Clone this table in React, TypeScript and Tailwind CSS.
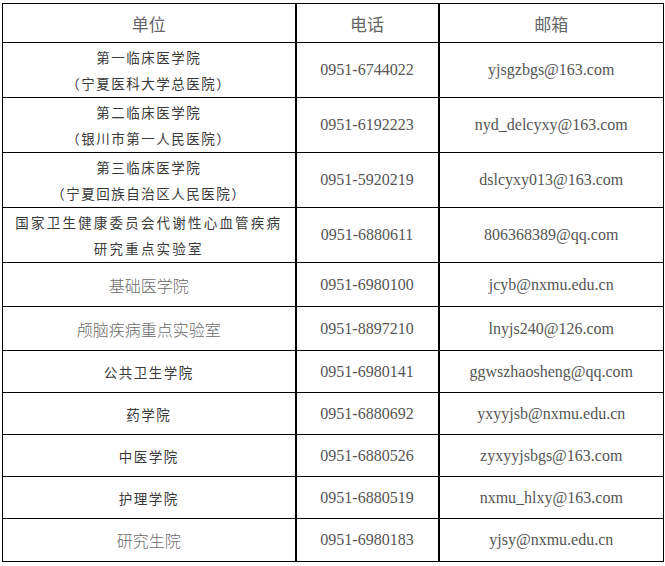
import React from 'react'

type Row = {
  unit: string[]
  kind: 'song' | 'hei'
  phone: string
  email: string
  h: string
  wide?: boolean
}

const rows: Row[] = [
  { unit: ['第一临床医学院', '（宁夏医科大学总医院）'], kind: 'song', phone: '0951-6744022', email: 'yjsgzbgs@163.com', h: 'h-[55px]' },
  { unit: ['第二临床医学院', '（银川市第一人民医院）'], kind: 'song', phone: '0951-6192223', email: 'nyd_delcyxy@163.com', h: 'h-[55px]' },
  { unit: ['第三临床医学院', '（宁夏回族自治区人民医院）'], kind: 'song', phone: '0951-5920219', email: 'dslcyxy013@163.com', h: 'h-[55px]' },
  { unit: ['国家卫生健康委员会代谢性心血管疾病', '研究重点实验室'], kind: 'song', phone: '0951-6880611', email: '806368389@qq.com', h: 'h-[55px]', wide: true },
  { unit: ['基础医学院'], kind: 'hei', phone: '0951-6980100', email: 'jcyb@nxmu.edu.cn', h: 'h-[44px]' },
  { unit: ['颅脑疾病重点实验室'], kind: 'hei', phone: '0951-8897210', email: 'lnyjs240@126.com', h: 'h-[44px]' },
  { unit: ['公共卫生学院'], kind: 'song', phone: '0951-6980141', email: 'ggwszhaosheng@qq.com', h: 'h-[42px]' },
  { unit: ['药学院'], kind: 'song', phone: '0951-6880692', email: 'yxyyjsb@nxmu.edu.cn', h: 'h-[42px]' },
  { unit: ['中医学院'], kind: 'song', phone: '0951-6880526', email: 'zyxyyjsbgs@163.com', h: 'h-[42px]' },
  { unit: ['护理学院'], kind: 'song', phone: '0951-6880519', email: 'nxmu_hlxy@163.com', h: 'h-[42px]' },
  { unit: ['研究生院'], kind: 'hei', phone: '0951-6980183', email: 'yjsy@nxmu.edu.cn', h: 'h-[43px]' },
]

export default function App() {
  return (
    <div className="min-h-screen bg-white pl-[2px] pt-[3px]">
      <table className="w-[661px] table-fixed border-collapse border border-black">
        <colgroup>
          <col className="w-[293px]" />
          <col className="w-[143px]" />
          <col className="w-[225px]" />
        </colgroup>
        <thead>
          <tr className="h-[39px]">
            {['单位', '电话', '邮箱'].map((t, i) => (
              <th
                key={t}
                className={`border-b border-black p-0 text-center align-middle text-[17px] font-normal leading-none text-[#666] font-['Noto_Sans_CJK_SC',sans-serif] ${
                  i < 2 ? 'border-r-2' : ''
                }`}
              >
                {t}
              </th>
            ))}
          </tr>
        </thead>
        <tbody>
          {rows.map((r) => (
            <tr key={r.phone} className={r.h}>
              <td className="border-b border-r-2 border-black p-0 text-center align-middle">
                {r.unit.map((line) =>
                  r.kind === 'song' ? (
                    <div
                      key={line}
                      className={`text-[13.5px] leading-[26px] text-[#3a3a3a] font-['Noto_Sans_CJK_SC',sans-serif] ${
                        r.wide ? 'tracking-[2.2px]' : 'tracking-[1.5px]'
                      }`}
                    >
                      {line}
                    </div>
                  ) : (
                    <div
                      key={line}
                      className="text-[16px] leading-[26px] text-[#6a6a6a] font-['Noto_Sans_CJK_SC',sans-serif] font-light"
                    >
                      {line}
                    </div>
                  )
                )}
              </td>
              <td className="border-b border-r-2 border-black p-0 text-center align-middle font-['Liberation_Serif',serif] text-[16px] text-[#555]">
                {r.phone}
              </td>
              <td className="border-b border-black p-0 text-center align-middle font-['Liberation_Serif',serif] text-[16px] text-[#555]">
                {r.email}
              </td>
            </tr>
          ))}
        </tbody>
      </table>
    </div>
  )
}
